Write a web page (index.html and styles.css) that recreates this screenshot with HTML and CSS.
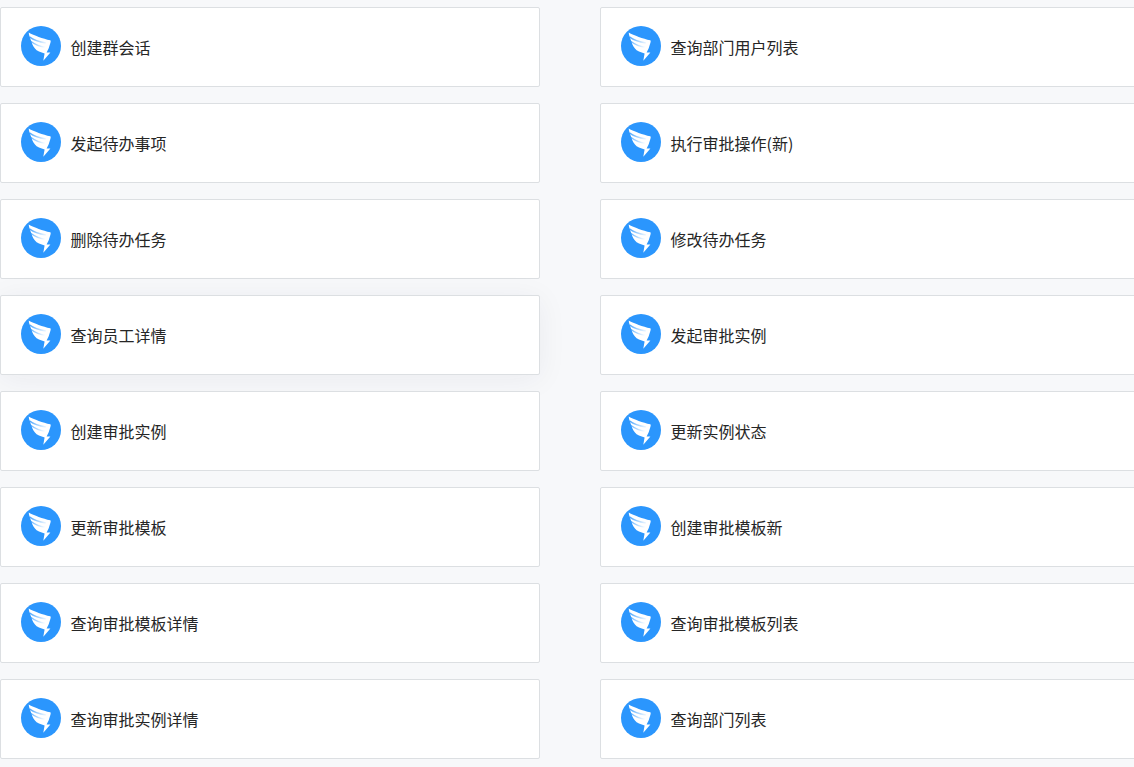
FILE: index.html
```html
<!DOCTYPE html>
<html lang="zh-CN">
<head>
<meta charset="utf-8">
<title>钉钉连接器</title>
<link rel="stylesheet" href="styles.css">
</head>
<body>
<svg class="defs" width="0" height="0" aria-hidden="true">
  <defs>
    <linearGradient id="feather" gradientUnits="userSpaceOnUse" x1="8" y1="10" x2="25" y2="20">
      <stop offset="0" stop-color="#2b96fd" stop-opacity="0.9"/>
      <stop offset="0.5" stop-color="#2b96fd" stop-opacity="0.45"/>
      <stop offset="1" stop-color="#2b96fd" stop-opacity="0"/>
    </linearGradient>
    <symbol id="ding" viewBox="0 0 40 40">
      <circle cx="20" cy="20" r="20" fill="#2b96fd"/>
      <path fill="#fff" d="M7.700 6.500C13 9.500 22 12.700 29.300 14.300C30 14.800 29.700 16 29.200 17.500L27.600 22.500L25.600 26.600L29.400 26.600L22.300 34.700L23.600 27.600L18 25.600C14.500 24 12.500 21 11.200 18C10.800 16.800 10.600 15.800 10.200 15C9 12 7.900 9.300 7.700 6.500Z"/>
      <path fill="none" stroke="url(#feather)" stroke-width="1.500" d="M8.300 10.800C12.500 13.800 18 15.800 25 17"/>
      <path fill="none" stroke="url(#feather)" stroke-width="1.500" d="M10 15.500C14 18.500 18.500 20.500 25 21.500"/>
    </symbol>
  </defs>
</svg>
<main class="grid">
  <a class="card"><svg class="icon"><use href="#ding"/></svg><span class="label">创建群会话</span></a>
  <a class="card"><svg class="icon"><use href="#ding"/></svg><span class="label">查询部门用户列表</span></a>
  <a class="card"><svg class="icon"><use href="#ding"/></svg><span class="label">发起待办事项</span></a>
  <a class="card"><svg class="icon"><use href="#ding"/></svg><span class="label">执行审批操作(新)</span></a>
  <a class="card"><svg class="icon"><use href="#ding"/></svg><span class="label">删除待办任务</span></a>
  <a class="card"><svg class="icon"><use href="#ding"/></svg><span class="label">修改待办任务</span></a>
  <a class="card card-hover"><svg class="icon"><use href="#ding"/></svg><span class="label">查询员工详情</span></a>
  <a class="card"><svg class="icon"><use href="#ding"/></svg><span class="label">发起审批实例</span></a>
  <a class="card"><svg class="icon"><use href="#ding"/></svg><span class="label">创建审批实例</span></a>
  <a class="card"><svg class="icon"><use href="#ding"/></svg><span class="label">更新实例状态</span></a>
  <a class="card"><svg class="icon"><use href="#ding"/></svg><span class="label">更新审批模板</span></a>
  <a class="card"><svg class="icon"><use href="#ding"/></svg><span class="label">创建审批模板新</span></a>
  <a class="card"><svg class="icon"><use href="#ding"/></svg><span class="label">查询审批模板详情</span></a>
  <a class="card"><svg class="icon"><use href="#ding"/></svg><span class="label">查询审批模板列表</span></a>
  <a class="card"><svg class="icon"><use href="#ding"/></svg><span class="label">查询审批实例详情</span></a>
  <a class="card"><svg class="icon"><use href="#ding"/></svg><span class="label">查询部门列表</span></a>
</main>
</body>
</html>
```
FILE: styles.css
```css
html, body {
  margin: 0;
  height: 100%;
  overflow: hidden;
  background: #f7f8fa;
}
.defs {
  display: block;
  height: 0;
}
.grid {
  display: grid;
  grid-template-columns: 540px 540px;
  grid-auto-rows: 80px;
  column-gap: 60px;
  row-gap: 16px;
  padding-top: 7px;
  width: 1140px;
}
.card {
  display: flex;
  align-items: center;
  box-sizing: border-box;
  padding: 0 20px;
  background: #fff;
  border: 1px solid #dcdfe2;
  border-radius: 2px;
  color: #262626;
  font: 16px/24px "Noto Sans CJK SC", "Noto Sans", sans-serif;
}
.card-hover {
  box-shadow: 0 4px 30px rgba(30, 40, 70, 0.06);
}
.icon {
  flex: none;
  width: 40px;
  height: 40px;
  margin-right: 9.5px;
  margin-bottom: 2px;
}
```
